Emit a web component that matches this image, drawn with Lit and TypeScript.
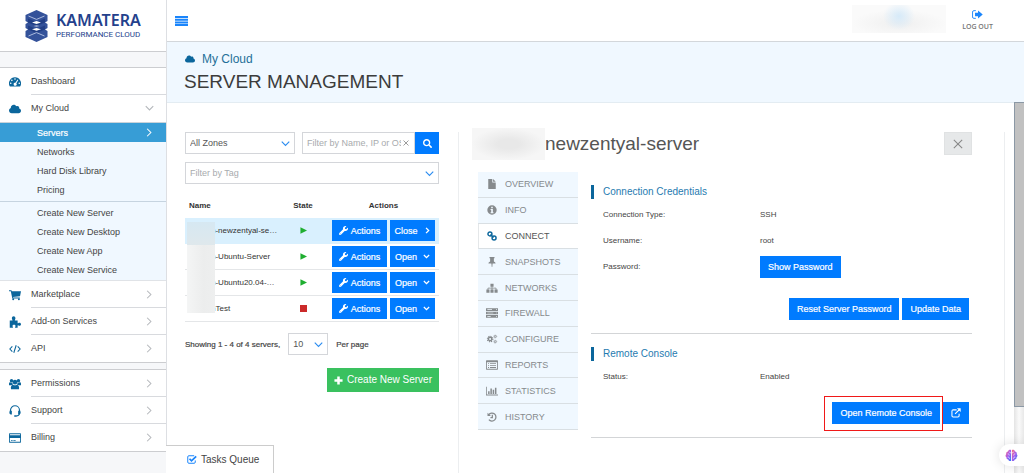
import { LitElement, html, css, svg, nothing, TemplateResult, SVGTemplateResult } from "lit";
import { customElement, property, state } from "lit/decorators.js";
import { classMap } from "lit/directives/class-map.js";

interface Glyph {
  box: string;
  body: SVGTemplateResult;
}

const gear = (cx: number, cy: number, r: number) => svg`
  <circle cx=${cx} cy=${cy} r=${r * 0.62} fill="none" stroke="currentColor" stroke-width=${r * 0.5}></circle>
  <circle cx=${cx} cy=${cy} r=${r} fill="none" stroke="currentColor" stroke-width=${r * 0.4}
    stroke-dasharray="${r * 0.42} ${r * 0.365}"></circle>`;

const GLYPHS: Record<string, Glyph> = {
  dashboard: {
    box: "0 0 18 14",
    body: svg`<path fill="currentColor" fill-rule="evenodd" d="M9 0a9 9 0 0 1 7.6 13.8H1.4A9 9 0 0 1 9 0zM9 1.3a1.2 1.2 0 1 0 0 2.4 1.2 1.2 0 0 0 0-2.4zM4.3 3.3a1.2 1.2 0 1 0 0 2.4 1.2 1.2 0 0 0 0-2.4zM2.6 7.6a1.2 1.2 0 1 0 0 2.4 1.2 1.2 0 0 0 0-2.4zM15.4 7.6a1.2 1.2 0 1 0 0 2.4 1.2 1.2 0 0 0 0-2.4zM12.9 3.2L9.6 8.3a2.2 2.2 0 1 0 1.3 .8l3-5.2z"></path>`,
  },
  cloud: {
    box: "0 32 640 448",
    body: svg`<path fill="currentColor" d="M537.6 226.6c4.1-10.7 6.4-22.4 6.4-34.6 0-53-43-96-96-96-19.7 0-38.1 6-53.3 16.2C367 64.2 315.3 32 256 32c-88.4 0-160 71.6-160 160 0 2.7.1 5.4.2 8.1C40.2 219.8 0 273.2 0 336c0 79.5 64.5 144 144 144h368c70.7 0 128-57.3 128-128 0-61.9-44-113.6-102.4-125.4z"></path>`,
  },
  cart: {
    box: "0 0 16 14",
    body: svg`<path fill="currentColor" d="M0 .5h3.3l.4 1.6H16l-1.3 6.4-9.5 1 .2.9h9v1.2H4.4L2.4 1.9H0z"></path><circle cx="5.6" cy="12.7" r="1.3" fill="currentColor"></circle><circle cx="13.2" cy="12.7" r="1.3" fill="currentColor"></circle>`,
  },
  puzzle: {
    box: "0 0 16 16",
    body: svg`<path fill="currentColor" d="M1 6h3.6c.6-.5-.8-1.2-.8-3C3.8 1.3 4.9.3 6.2.3s2.4 1 2.4 2.7c0 1.8-1.3 2.5-.7 3H11.5v3.6c.5.5 1.2-.6 2.5-.6 1.2 0 2 .9 2 2s-.8 2.1-2 2.1c-1.3 0-2-1.1-2.5-.6V15.7H8.2c-.6-.6.5-1.2.5-2.4 0-1.1-.9-1.8-2-1.8s-2 .7-2 1.8c0 1.2 1 1.8.5 2.4H1z"></path>`,
  },
  code: {
    box: "0 0 18 12",
    body: svg`<path fill="none" stroke="currentColor" stroke-width="1.6" d="M5 2L1.3 6 5 10M13 2l3.7 4L13 10M10.8.4L7.2 11.6"></path>`,
  },
  users: {
    box: "0 0 18 16",
    body: svg`<g fill="currentColor"><circle cx="3.8" cy="3" r="2.6"></circle><circle cx="14.2" cy="3" r="2.6"></circle><circle cx="9" cy="5.2" r="3.4"></circle><path d="M0 10V7.5C0 6 1 5.4 2 5.4c1.6 1 2.6.8 3 .6.2 1.2.7 2.2 1.3 2.9-1.2 0-2 .4-2.7 1.1zM18 10V7.5C18 6 17 5.4 16 5.4c-1.6 1-2.6.8-3 .6-.2 1.2-.7 2.2-1.3 2.9 1.2 0 2 .4 2.7 1.1zM3 16C2.200 12 3.600 9.300 6 9c2 1.200 4 1.200 6 0 2.400.3 3.800 3 3 7z"></path></g>`,
  },
  headset: {
    box: "0 0 16 16",
    body: svg`<path fill="none" stroke="currentColor" stroke-width="1.5" d="M2 9V7a6 6 0 0 1 12 0v4c0 2.5-1.5 3.5-4.5 3.700"></path><path fill="currentColor" d="M1 7.5h2.800v5H2.500C1 12.300.5 11.500.5 10zM15 7.500h-2.800v5h1.300c1.500-.2 2-1 2-2.500zM7 13.700h3v2H7z"></path>`,
  },
  card: {
    box: "0 0 18 14",
    body: svg`<path fill="currentColor" fill-rule="evenodd" d="M1 0h16a1 1 0 0 1 1 1v12a1 1 0 0 1-1 1H1a1 1 0 0 1-1-1V1a1 1 0 0 1 1-1zM1.300 1.300v1.400h15.400V1.300zM1.300 7v5.700h15.400V7zM3 10h2.500v1.200H3zM6.500 10h3.500v1.200H6.500z"></path>`,
  },
  right: { box: "0 0 8 12", body: svg`<path fill="none" stroke="currentColor" stroke-width="1.4" d="M1.5 1l5 5-5 5"></path>` },
  down: { box: "0 0 12 8", body: svg`<path fill="none" stroke="currentColor" stroke-width="1.5" d="M1 1.5l5 5 5-5"></path>` },
  rightBold: { box: "0 0 8 12", body: svg`<path fill="none" stroke="currentColor" stroke-width="2.2" d="M1.5 1.5L6 6l-4.5 4.5"></path>` },
  downBold: { box: "0 0 12 8", body: svg`<path fill="none" stroke="currentColor" stroke-width="2.2" d="M1.5 1.5L6 6l4.5-4.5"></path>` },
  times: { box: "0 0 12 12", body: svg`<path fill="none" stroke="currentColor" stroke-width="1.3" d="M1 1l10 10M11 1L1 11"></path>` },
  menu: { box: "0 0 13 10", body: svg`<path fill="currentColor" d="M0 0h13v2H0zM0 2.700h13v2H0zM0 5.400h13v2H0zM0 8h13v2H0z"></path>` },
  logout: {
    box: "0 0 20 16",
    body: svg`<path fill="none" stroke="currentColor" stroke-width="1.7" d="M7 1H3.5A2.5 2.5 0 0 0 1 3.5v9A2.5 2.5 0 0 0 3.5 15H7"></path><path fill="currentColor" d="M5.5 5H11V.8L19.5 8 11 15.2V11H5.5z"></path>`,
  },
  search: {
    box: "0 0 512 512",
    body: svg`<path fill="currentColor" d="M505 442.7L405.3 343c-4.5-4.5-10.6-7-17-7H372c27.6-35.3 44-79.7 44-128C416 93.1 322.9 0 208 0S0 93.1 0 208s93.1 208 208 208c48.3 0 92.7-16.4 128-44v16.3c0 6.4 2.5 12.5 7 17l99.7 99.7c9.4 9.4 24.6 9.4 33.9 0l28.3-28.3c9.4-9.4 9.4-24.6.1-34zM208 336c-70.7 0-128-57.2-128-128 0-70.7 57.2-128 128-128 70.7 0 128 57.2 128 128 0 70.7-57.2 128-128 128z"></path>`,
  },
  wrench: {
    box: "0 0 512 512",
    body: svg`<path fill="currentColor" d="M507.73 109.1c-2.24-9.03-13.54-12.09-20.12-5.51l-74.36 74.36-67.88-11.31-11.31-67.88 74.36-74.36c6.62-6.62 3.43-17.9-5.66-20.16-47.38-11.74-99.55.91-136.58 37.93-39.64 39.64-50.55 97.1-34.05 147.2L18.74 402.76c-24.99 24.99-24.99 65.51 0 90.5 24.99 24.99 65.51 24.99 90.5 0l213.21-213.21c50.12 16.71 107.47 5.68 147.37-34.22 37.07-37.07 49.7-89.32 37.91-136.73zM64 472c-13.25 0-24-10.75-24-24 0-13.26 10.75-24 24-24s24 10.74 24 24c0 13.25-10.75 24-24 24z"></path>`,
  },
  play: { box: "0 0 8 8", body: svg`<path fill="#1fae30" d="M.5.2L8 4 .5 7.8z"></path>` },
  stop: { box: "0 0 8 8", body: svg`<path fill="#cb2a2a" d="M0 0h8v8H0z"></path>` },
  plus: { box: "0 0 10 10", body: svg`<path fill="currentColor" d="M3.6.5h2.8v3.1h3.1v2.8H6.4v3.1H3.6V6.4H.5V3.6h3.1z"></path>` },
  file: { box: "0 0 14 16", body: svg`<path fill="currentColor" d="M1 0h6.5v5.5H13V16H1zM8.7 0L13 4.3H8.7z"></path>` },
  info: {
    box: "0 0 16 16",
    body: svg`<path fill="currentColor" fill-rule="evenodd" d="M8 .5a7.5 7.5 0 1 1 0 15 7.5 7.5 0 0 1 0-15zM6.7 2.8v2.2h2.6V2.8zM5.7 6.3v1.5h1v3.7h-1V13h4.7v-1.5h-1V6.3z"></path>`,
  },
  link: {
    box: "0 0 16 16",
    body: svg`<g fill="none" stroke="currentColor" stroke-width="2.3"><circle cx="4.7" cy="4.7" r="3.2"></circle><circle cx="11.3" cy="11.3" r="3.2"></circle><path d="M5.5 5.5l5 5"></path></g>`,
  },
  pin: { box: "0 0 12 16", body: svg`<path fill="currentColor" d="M2 0h8v1.8H9V7c1.7.7 2.7 1.8 2.7 3.3H7L6.4 16h-.8L5 10.3H.3C.3 8.8 1.3 7.7 3 7V1.8H2z"></path>` },
  sitemap: {
    box: "0 0 18 16",
    body: svg`<g fill="currentColor"><path d="M6.5 1h5v5h-5zM0 10.5h5v5H0zM6.5 10.5h5v5h-5zM13 10.5h5v5h-5z"></path><path fill="none" stroke="currentColor" stroke-width="1.3" d="M9 5v6M2.5 11V8.2h13V11"></path></g>`,
  },
  server: {
    box: "0 0 18 14",
    body: svg`<path fill="currentColor" fill-rule="evenodd" d="M0 0h18v4H0zM0 5h18v4H0zM0 10h18v4H0zM2 1.5v1h7v-1zM2 6.5v1h9v-1zM2 11.5v1h5v-1zM15 1.5v1h1.4v-1zM15 6.5v1h1.4v-1zM15 11.5v1h1.4v-1z"></path>`,
  },
  gears: { box: "0 0 18 16", body: svg`${gear(6, 8, 4.4)}${gear(14.2, 4, 2.4)}${gear(14.2, 12.2, 2.4)}` },
  report: {
    box: "0 0 18 14",
    body: svg`<path fill="currentColor" fill-rule="evenodd" d="M1 0h16a1 1 0 0 1 1 1v12a1 1 0 0 1-1 1H1a1 1 0 0 1-1-1V1a1 1 0 0 1 1-1zM1.3 3v9.7h15.4V3zM3 4.3h1.6v1.3H3zM6 4.3h9v1.3H6zM3 7.2h1.6v1.3H3zM6 7.2h9v1.3H6zM3 10.1h1.6v1.3H3zM6 10.1h9v1.3H6z"></path>`,
  },
  chart: { box: "0 0 20 16", body: svg`<path fill="currentColor" d="M0 1h1.3v13H20v1.3H0zM3.5 8.5H6V13H3.5zM7.3 4h2.5v9H7.3zM11.1 6h2.5v7h-2.5zM14.9 2.5h2.5V13h-2.5z"></path>` },
  history: {
    box: "0 0 16 16",
    body: svg`<path fill="none" stroke="currentColor" stroke-width="2" d="M2.8 4.2A6.4 6.4 0 1 1 3 12.2M8.5 4.5v4.3H5.5"></path><path fill="currentColor" d="M.8 1l5.5 5.5H.8z"></path>`,
  },
  external: {
    box: "0 0 16 16",
    body: svg`<path fill="none" stroke="currentColor" stroke-width="1.7" d="M9 3H3.5A2 2 0 0 0 1.5 5v7.5a2 2 0 0 0 2 2H11a2 2 0 0 0 2-2V9M6.5 9.5L14 2"></path><path fill="currentColor" d="M9.5.5h6v6z"></path>`,
  },
  check: {
    box: "0 0 16 14",
    body: svg`<path fill="none" stroke="currentColor" stroke-width="1.6" d="M11.5 1H3A1.8 1.8 0 0 0 1.2 2.8v8.4A1.8 1.8 0 0 0 3 13h8.4a1.8 1.8 0 0 0 1.8-1.8V8.5"></path><path fill="none" stroke="currentColor" stroke-width="2.8" d="M4 5.8l3.2 3.4L14.7 2"></path>`,
  },
  brain: {
    box: "0 0 24 24",
    body: svg`<defs><linearGradient id="b" x1="0" y1="0" x2="1" y2="1"><stop offset="0" stop-color="#ff6a7a"></stop><stop offset=".5" stop-color="#a45cf0"></stop><stop offset="1" stop-color="#2f7df6"></stop></linearGradient></defs>
      <path fill="url(#b)" d="M11.2 2v20c-3 1-5-.5-5.2-2.5-2.5-.2-3.8-2-3.3-4.2C.7 14.2.4 11 2.2 9.5 1.8 6.8 3.5 5 5.5 4.8 6 2 9 .8 11.2 2z"></path>
      <path fill="url(#b)" d="M12.8 2v20c3 1 5-.5 5.2-2.5 2.5-.2 3.8-2 3.3-4.2 2-1.1 2.3-4.3.5-5.8.4-2.7-1.3-4.5-3.3-4.7C18 2 15 .8 12.8 2z"></path>
      <path fill="none" stroke="#fff" stroke-width="1.2" d="M5 9c2 0 3 1 3 3M11 7c-2 0-3-1-3-2M5 15c2.5 0 3.5 1 3.5 3M19 9c-2 0-3 1-3 3M13 7c2 0 3-1 3-2M19 15c-2.5 0-3.5 1-3.5 3"></path>`,
  },
  logo: {
    box: "0 0 22 32",
    body: svg`<path fill="#34529a" d="M11 0L22 5v6l-2.500 1.500L22 14v4l-2.500 1.500L22 21v6l-11 5L0 27v-6l2.500-1.500L0 18v-4l2.500-1.500L0 11V5z"></path>
      <path fill="#223f86" d="M2.500 8.500L11 12l8.500-3.500v4L11 16l-8.500-3.500zM2.500 15.500L11 19l8.500-3.500v4L11 23l-8.500-3.500z"></path>
      <path fill="none" stroke="#b9c6e4" stroke-width=".9" d="M3 6l8 3.400L19 6M3 26l8-3.400 8 3.400"></path>
      <path fill="#fff" d="M6.500 12.600l4.500-1.500 4.500 1.500-4.500 1.300zM6.500 19.300l4.500-1.300 4.500 1.300-4.500 1.500zM8 16l3-.6 3 .6-3 .6z"></path>`,
  },
};

@customElement("ui-icon")
class UiIcon extends LitElement {
  @property() name = "";
  static styles = css`
    :host { display: inline-block; flex: none; width: 12px; height: 12px; line-height: 0; }
    .art { display: block; width: 100%; height: 100%; }
  `;
  render() {
    const g = GLYPHS[this.name];
    return g ? html`<svg class="art" viewBox=${g.box} aria-hidden="true">${g.body}</svg>` : nothing;
  }
}

interface Entry { label: string; icon: string; }
interface Server { name: string; running: boolean; open: boolean; }

const MAIN_MENU: Entry[] = [
  { label: "Marketplace", icon: "cart" },
  { label: "Add-on Services", icon: "puzzle" },
  { label: "API", icon: "code" },
];
const ACCOUNT_MENU: Entry[] = [
  { label: "Permissions", icon: "users" },
  { label: "Support", icon: "headset" },
  { label: "Billing", icon: "card" },
];
const TABS: Entry[] = [
  { label: "OVERVIEW", icon: "file" },
  { label: "INFO", icon: "info" },
  { label: "CONNECT", icon: "link" },
  { label: "SNAPSHOTS", icon: "pin" },
  { label: "NETWORKS", icon: "sitemap" },
  { label: "FIREWALL", icon: "server" },
  { label: "CONFIGURE", icon: "gears" },
  { label: "REPORTS", icon: "report" },
  { label: "STATISTICS", icon: "chart" },
  { label: "HISTORY", icon: "history" },
];
const SERVERS: Server[] = [
  { name: "n-newzentyal-se…", running: true, open: true },
  { name: "n-Ubuntu-Server", running: true, open: false },
  { name: "n-Ubuntu20.04-…", running: true, open: false },
  { name: "nTest", running: false, open: false },
];

@customElement("side-nav")
class SideNav extends LitElement {
  static styles = css`
    :host { display: block; box-sizing: border-box; background: #f6f7f9; border-right: 1px solid #dddfe3; color: #444; font-size: 9px; }
    a { color: inherit; text-decoration: none; }
    .brand { display: flex; align-items: center; gap: 8px; height: 51px; padding-left: 25px; background: #fff; border-bottom: 1px solid #cccdd0; }
    .mark { width: 23px; height: 32px; }
    .words { display: grid; gap: 2px; color: #24418c; }
    .word { font: 600 16px/16px "Noto Sans", sans-serif; }
    .tag { font: 8px/10px Roboto, sans-serif; }
    .group { background: #fff; border-top: 1px solid #cccdd0; border-bottom: 1px solid #cccdd0; }
    .first { margin-top: 15px; }
    .second { margin-top: 6px; }
    .item { display: flex; align-items: center; height: 27px; padding-left: 9px; }
    .item .ic { width: 12px; height: 12px; color: #0b669c; margin-right: 10px; }
    .label { flex: 1; display: flex; align-items: center; justify-content: space-between; height: 26px; padding-right: 14px; border-bottom: 1px solid #d8dade; }
    .last .label { border-bottom-color: transparent; }
    .chev { width: 6px; height: 9px; color: #b4b7bb; }
    .chev.down { width: 9px; height: 6px; margin-right: -2px; }
    .sub { background: #f0f8ff; border-top: 1px solid #c9d3da; padding-bottom: 2px; }
    .sub + .sub { padding: 1px 0; border-bottom: 1px solid #e0e3e7; border-top-color: #c6d4e0; }
    .sub a { display: flex; align-items: center; justify-content: space-between; height: 19px; padding: 0 14px 0 37px; }
    .sub .on { background: #379dd6; color: #fff; -webkit-text-stroke: 0.2px #fff; }
    .sub .on .chev { color: #fff; }
  `;
  private row(e: Entry, last = false): TemplateResult {
    return html`<a href="#" class=${classMap({ item: true, last })}>
      <ui-icon class="ic" name=${e.icon}></ui-icon>
      <span class="label">${e.label}<ui-icon class="chev" name="right"></ui-icon></span></a>`;
  }
  render() {
    return html`
      <a class="brand" href="#"><ui-icon class="mark" name="logo"></ui-icon>
        <span class="words"><span class="word">KAMATERA</span><span class="tag">PERFORMANCE CLOUD</span></span></a>
      <nav>
        <div class="group first">
          <a href="#" class="item"><ui-icon class="ic" name="dashboard"></ui-icon><span class="label">Dashboard</span></a>
          <a href="#" class="item last"><ui-icon class="ic" name="cloud"></ui-icon><span class="label">My Cloud<ui-icon class="chev down" name="down"></ui-icon></span></a>
          <div class="sub">
            <a href="#" class="on">Servers<ui-icon class="chev" name="right"></ui-icon></a>
            ${["Networks", "Hard Disk Library", "Pricing"].map((t) => html`<a href="#">${t}</a>`)}
          </div>
          <div class="sub">
            ${["Server", "Desktop", "App", "Service"].map((t) => html`<a href="#">Create New ${t}</a>`)}
          </div>
          ${MAIN_MENU.map((e, i) => this.row(e, i === 2))}
        </div>
        <div class="group second">${ACCOUNT_MENU.map((e, i) => this.row(e, i === 2))}</div>
      </nav>`;
  }
}

const buttons = css`
  .btn { display: inline-flex; align-items: center; justify-content: center; box-sizing: border-box; height: 22px; padding: 0 8px;
    border: 0; background: #007bff; color: #fff; font: 9px/12px "Liberation Sans", Arial, sans-serif; white-space: nowrap; cursor: pointer; -webkit-text-stroke: 0.2px #fff; }
`;

@customElement("server-list")
class ServerList extends LitElement {
  static styles = [buttons, css`
    :host { display: block; color: #333; }
    .filters { display: grid; grid-template-columns: 110px 1fr; gap: 8px 7px; }
    .pick { position: relative; display: block; }
    .pick ui-icon { position: absolute; right: 5px; top: 8px; width: 9px; height: 7px; color: #2a8cf0; pointer-events: none; }
    .wide { grid-column: 1 / -1; }
    select, input { display: block; width: 100%; height: 22px; box-sizing: border-box; margin: 0; padding: 0 4px; border: 1px solid #d4d6da; border-radius: 0;
      background: #fff; color: #555; font: 9px "Liberation Sans", Arial, sans-serif; appearance: none; outline: none; }
    input::placeholder, .wide select { color: #a8abae; }
    .find { display: flex; }
    .text { position: relative; flex: 1; }
    .text input { padding-right: 12px; }
    .clear { position: absolute; right: 4px; top: 6px; width: 10px; height: 10px; padding: 2px; border: 0; background: #fff; color: #666; line-height: 0; }
    .clear ui-icon { width: 6px; height: 6px; }
    .find .btn { width: 24px; padding: 0; }
    .find .btn ui-icon { width: 9px; height: 9px; }
    .holder { position: relative; margin-top: 9px; }
    table { width: 100%; table-layout: fixed; border-collapse: collapse; font-size: 8px; line-height: 10px; }
    th { height: 25px; padding: 0; color: #333; }
    th:first-child { width: 99px; padding-left: 4px; box-sizing: border-box; text-align: left; }
    th:nth-child(2) { width: 38px; }
    th:last-child { padding-left: 6px; }
    td { height: 25px; padding: 0; border-bottom: 1px solid #e4e6e8; white-space: nowrap; }
    td:first-child { padding-left: 26px; }
    td:nth-child(2) { text-align: center; }
    td ui-icon { width: 7px; height: 7px; vertical-align: middle; }
    tr.on td { background: #d9f0fe; border-bottom-color: #d9f0fe; }
    .acts { display: flex; justify-content: flex-end; gap: 3px; padding-right: 4px; }
    .acts .btn { height: 21px; gap: 3px; width: 55px; padding: 0; }
    .acts .btn ui-icon { width: 9px; height: 9px; }
    .acts .toggle { width: 45px; gap: 6px; }
    .acts .toggle ui-icon { width: 7px; height: 7px; }
    .veil { position: absolute; left: 2px; top: 29px; width: 28px; height: 91px;
      background: linear-gradient(90deg, #f4f5f5 0, #eceded 60%, #eeefef 100%); }
    .veil::before { content: ""; display: block; height: 23px; background: linear-gradient(#d6e8f2, #dfe8ec); }
    .pager { display: flex; align-items: center; margin-top: 11px; font-size: 8px; gap: 8px; color: #444; -webkit-text-stroke: 0.2px #444; }
    .pager .pick { width: 40px; -webkit-text-stroke: 0; }
    .foot { display: flex; justify-content: flex-end; margin-top: 13px; }
    .foot .btn { height: 24px; gap: 4px; padding: 0 7px; background: #3ac15f; font-size: 10px; -webkit-text-stroke: 0; }
    .foot ui-icon { width: 9px; height: 9px; }
  `];
  render() {
    return html`
      <div class="filters">
        <label class="pick"><select aria-label="Zone"><option>All Zones</option></select><ui-icon name="down"></ui-icon></label>
        <div class="find">
          <div class="text"><input type="text" aria-label="Filter servers" placeholder="Filter by Name, IP or OS">
            <button class="clear" aria-label="Clear filter"><ui-icon name="times"></ui-icon></button></div>
          <button class="btn" aria-label="Search"><ui-icon name="search"></ui-icon></button>
        </div>
        <label class="pick wide"><select aria-label="Tag"><option>Filter by Tag</option></select><ui-icon name="down"></ui-icon></label>
      </div>
      <div class="holder">
        <table>
          <thead><tr><th>Name</th><th>State</th><th>Actions</th></tr></thead>
          <tbody>${SERVERS.map((s) => html`<tr class=${classMap({ on: s.open })}>
            <td>${s.name}</td>
            <td><ui-icon name=${s.running ? "play" : "stop"}></ui-icon></td>
            <td><div class="acts"><button class="btn"><ui-icon name="wrench"></ui-icon>Actions</button>
              <button class="btn toggle">${s.open ? "Close" : "Open"}<ui-icon name=${s.open ? "rightBold" : "downBold"}></ui-icon></button></div></td>
          </tr>`)}</tbody>
        </table>
        <div class="veil"></div>
      </div>
      <div class="pager"><span>Showing 1 - 4 of 4 servers,</span>
        <label class="pick"><select aria-label="Servers per page"><option>10</option></select><ui-icon name="down"></ui-icon></label><span>Per page</span></div>
      <div class="foot"><button class="btn"><ui-icon name="plus"></ui-icon>Create New Server</button></div>`;
  }
}

@customElement("server-panel")
class ServerPanel extends LitElement {
  @state() private tab = "CONNECT";
  static styles = [buttons, css`
    :host { display: block; box-sizing: border-box; padding: 0 32px 0 13px; border-left: 1px solid #eceef0; border-right: 1px solid #eceef0; color: #444; }
    .head { display: flex; align-items: center; height: 23px; margin-bottom: 17px; }
    .mask { flex: none; width: 73px; height: 32px; background: radial-gradient(ellipse closest-side, #e8e8e8 30%, #f6f6f6 100%); }
    h2 { flex: 1; margin: 0; font-size: 19px; line-height: 23px; font-weight: 400; color: #555; }
    .x { width: 28px; height: 23px; padding: 0; border: 1px solid #e0e2e3; background: #e6e8e9; color: #888; line-height: 0; }
    .x ui-icon { width: 10px; height: 10px; }
    .cols { display: grid; grid-template-columns: 100px 1fr; gap: 13px; align-items: start; margin-left: 6px; }
    .tabs { display: grid; grid-auto-rows: 1fr; height: 258px; background: #f0f8ff; }
    .tab { display: flex; align-items: center; gap: 7px; padding: 0 0 0 8px; border: 0; border-bottom: 1px solid #d9dfe3;
      background: none; color: #868a8d; font: 9px "Liberation Sans", Arial, sans-serif; text-align: left; }
    .tab ui-icon { width: 12px; height: 10px; }
    .tab.on { background: #fff; color: #555; border-left: 1px solid #e4e7e9; padding-left: 7px; }
    .tab.on ui-icon { color: #0b669c; }
    section { padding: 13px 3px 13px 0; border-bottom: 1px solid #d3d5d7; }
    h3 { margin: 0 0 3px; padding-left: 9px; border-left: 3px solid #0b669c; font-size: 10px; line-height: 14px; font-weight: 400; color: #1f7bb0; }
    dl { margin: 0; padding-left: 12px; font-size: 8px; line-height: 10px; }
    dl div { display: grid; grid-template-columns: 157px 1fr; align-items: center; height: 26px; }
    dt, dd { margin: 0; }
    .acts { display: flex; justify-content: flex-end; gap: 3px; margin-top: 18px; }
    .console { margin-top: 12px; }
    .ring { position: relative; display: flex; }
    .ring::after { content: ""; position: absolute; inset: -6px -3px -7px -8px; border: 1px solid #f01818; pointer-events: none; }
    .acts .ext { width: 26px; padding: 0; }
    .ext ui-icon { width: 10px; height: 10px; }
  `];
  render() {
    return html`
      <div class="head"><span class="mask"></span><h2>newzentyal-server</h2><button class="x" aria-label="Close"><ui-icon name="times"></ui-icon></button></div>
      <div class="cols">
        <div class="tabs">${TABS.map((t) => html`<button class=${classMap({ tab: true, on: t.label === this.tab })} @click=${() => (this.tab = t.label)}><ui-icon name=${t.icon}></ui-icon>${t.label}</button>`)}</div>
        <div>
          <section>
            <h3>Connection Credentials</h3>
            <dl><div><dt>Connection Type:</dt><dd>SSH</dd></div>
              <div><dt>Username:</dt><dd>root</dd></div>
              <div><dt>Password:</dt><dd><button class="btn">Show Password</button></dd></div></dl>
            <div class="acts"><button class="btn">Reset Server Password</button><button class="btn">Update Data</button></div>
          </section>
          <section>
            <h3>Remote Console</h3>
            <dl><div><dt>Status:</dt><dd>Enabled</dd></div></dl>
            <div class="acts console"><span class="ring"><button class="btn">Open Remote Console</button></span>
              <button class="btn ext" aria-label="Open in new window"><ui-icon name="external"></ui-icon></button></div>
          </section>
        </div>
      </div>`;
  }
}

@customElement("app-root")
class AppRoot extends LitElement {
  static styles = css`
    :host { position: relative; display: grid; grid-template-columns: 167px 1fr; min-height: 100vh; overflow: hidden; background: #fff; font-family: "Liberation Sans", Arial, sans-serif; }
    a { text-decoration: none; }
    .main { display: flex; flex-direction: column; }
    .top { display: flex; align-items: center; height: 41px; padding: 0 31px 0 8px; border-bottom: 1px solid #d3d7db; }
    .burger { padding: 0; border: 0; background: none; color: #1a85fb; line-height: 0; }
    .burger ui-icon { width: 13px; height: 10px; }
    .user { width: 94px; height: 28px; margin: 0 16px 4px auto; background: radial-gradient(ellipse 16px 14px at 50% 40%, #d6eaf9, transparent), radial-gradient(ellipse 52px 15px at 50% 65%, #efefef, #fafafa 90%); }
    .out { display: grid; justify-items: center; gap: 3px; color: #777; font: 600 7px/10px "Open Sans", sans-serif; }
    .out ui-icon { width: 11px; height: 9px; color: #1a85fb; }
    .hero { height: 61px; box-sizing: border-box; padding: 10px 18px 0 17px; background: #f0f8ff; border-bottom: 1px solid #e3ecf2; }
    .crumb { display: flex; align-items: center; gap: 7px; height: 14px; padding-left: 1px; font-size: 12px; line-height: 14px; color: #1f7099; }
    .crumb ui-icon { width: 10px; height: 8px; color: #0b669c; }
    h1 { margin: 4px 0 0; font-size: 19px; line-height: 24px; font-weight: 400; color: #3c3c3c; }
    .body { flex: 1; display: grid; grid-template-columns: 254px 1fr; gap: 19px; padding: 29px 19px 0 18px; }
    .tasks { position: absolute; left: 166px; bottom: 0; display: flex; align-items: center; gap: 4px; width: 108px; height: 28px; box-sizing: border-box; padding: 0 0 0 21px;
      border: 1px solid #ccc; border-bottom: 0; border-left: 0; background: #fff; color: #444; font: 10px "Liberation Sans", Arial, sans-serif; }
    .tasks ui-icon { width: 10px; height: 9px; color: #1a85fb; }
    .rail { position: absolute; top: 102px; right: 0; bottom: 0; width: 10px; background: linear-gradient(90deg, #e4e4e4, #fafafa 50%, #e8e8e8); }
    .thumb { height: 305px; box-sizing: border-box; border: 1px solid #8b98a5; border-right: 0; background: #c1c1c1; }
    .assist { position: absolute; right: 0; bottom: 7px; width: 25px; height: 22px; padding: 0; border: 0; border-radius: 11px 0 0 11px; background: #fff; box-shadow: 0 0 12px rgba(0, 0, 0, 0.12); line-height: 0; }
    .assist ui-icon { width: 13px; height: 13px; }
  `;
  render() {
    return html`
      <side-nav></side-nav>
      <div class="main">
        <header class="top">
          <button class="burger" aria-label="Menu"><ui-icon name="menu"></ui-icon></button>
          <span class="user"></span>
          <a class="out" href="#"><ui-icon name="logout"></ui-icon>LOG OUT</a>
        </header>
        <div class="hero">
          <div class="crumb"><ui-icon name="cloud"></ui-icon>My Cloud</div>
          <h1>SERVER MANAGEMENT</h1>
        </div>
        <main class="body"><server-list></server-list><server-panel></server-panel></main>
      </div>
      <button class="tasks"><ui-icon name="check"></ui-icon>Tasks Queue</button>
      <div class="rail"><div class="thumb"></div></div>
      <button class="assist" aria-label="Assistant"><ui-icon name="brain"></ui-icon></button>`;
  }
}
